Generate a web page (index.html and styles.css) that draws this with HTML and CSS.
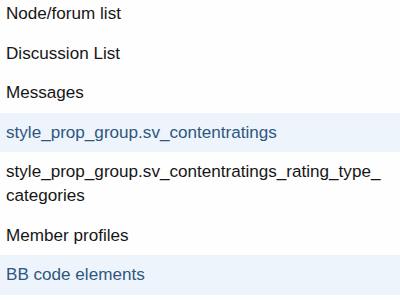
FILE: index.html
```html
<!DOCTYPE html>
<html>
<head>
<meta charset="utf-8">
<link rel="stylesheet" href="styles.css">
</head>
<body>
<ul class="list">
  <li class="item">Node/forum list</li>
  <li class="item">Discussion List</li>
  <li class="item">Messages</li>
  <li class="item item--active">style_prop_group.sv_contentratings</li>
  <li class="item">style_prop_group.sv_contentratings_rating_type_<br>categories</li>
  <li class="item">Member profiles</li>
  <li class="item item--active">BB code elements</li>
</ul>
</body>
</html>
```
FILE: styles.css
```css
html, body {
  margin: 0;
  padding: 0;
  background: #fefefe;
}
body {
  font-family: "Liberation Sans", Arial, sans-serif;
  font-size: 17.1px;
  color: #161616;
}
.list {
  list-style: none;
  margin: -5.75px 0 0 0;
  padding: 0;
}
.item {
  padding: 7.75px 6px;
  line-height: 24px;
}
.item--active {
  background: #eef4fb;
  color: #2e5780;
}
```
